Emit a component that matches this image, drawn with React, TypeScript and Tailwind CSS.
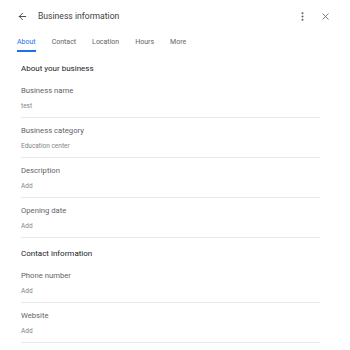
import { ArrowLeft, EllipsisVertical, X } from "lucide-react";

const tabs = ["About", "Contact", "Location", "Hours", "More"];

type Field = { label: string; value: string };

const about: Field[] = [
  { label: "Business name", value: "test" },
  { label: "Business category", value: "Education center" },
  { label: "Description", value: "Add" },
  { label: "Opening date", value: "Add" },
];

const contact: Field[] = [
  { label: "Phone number", value: "Add" },
  { label: "Website", value: "Add" },
];

function Row({ label, value }: Field) {
  return (
    <div className="border-b border-[#e8eaed] pt-[7px] pb-[6px]">
      <div className="h-[12px] text-[7.7px] leading-[12px] text-[#5f6368]">{label}</div>
      <div className="mt-[4px] h-[10px] text-[6.5px] leading-[10px] text-[#80868b]">{value}</div>
    </div>
  );
}

function Section({ title, fields }: { title: string; fields: Field[] }) {
  return (
    <section>
      <h2 className="mt-[10px] mb-[3px] h-[12px] text-[8px] leading-[12px] text-[#202124]">
        {title}
      </h2>
      {fields.map((f) => (
        <Row key={f.label} {...f} />
      ))}
    </section>
  );
}

export default function App() {
  return (
    <div
      className="h-[350px] w-[350px] overflow-hidden bg-white"
      style={{ fontFamily: "Roboto, 'Noto Sans', sans-serif" }}
    >
      <header className="flex h-[32px] items-center pl-[17px] pr-[19px]">
        <ArrowLeft size={11} strokeWidth={2} className="text-[#3c4043]" />
        <span className="ml-[10px] text-[8.6px] text-[#3c4043]">Business information</span>
        <div className="ml-auto flex items-center gap-[12px] text-[#5f6368]">
          <EllipsisVertical size={11} strokeWidth={2.5} />
          <X size={11} strokeWidth={1.8} />
        </div>
      </header>

      <nav className="flex h-[20px] gap-[16px] pl-[17px]">
        {tabs.map((t, i) => (
          <div
            key={t}
            className={
              i === 0
                ? "flex items-center border-b-2 border-[#1a73e8] pt-[2px] text-[7px] text-[#1a73e8]"
                : "flex items-center border-b-2 border-transparent pt-[2px] text-[7px] text-[#5f6368]"
            }
          >
            {t}
          </div>
        ))}
      </nav>

      <main className="w-[320px] pl-[21px] pt-[1px]">
        <Section title="About your business" fields={about} />
        <Section title="Contact information" fields={contact} />
      </main>
    </div>
  );
}
